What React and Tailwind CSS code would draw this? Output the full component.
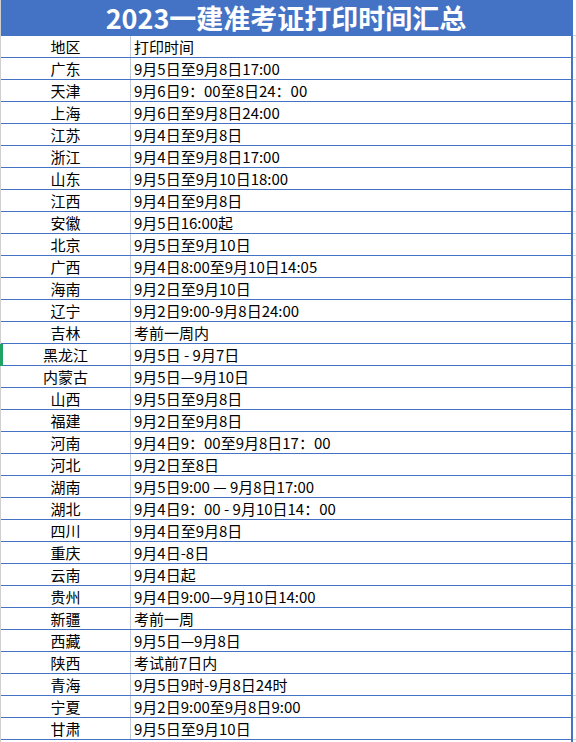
import React from "react";

const rows = [
  ["地区", "打印时间"],
  ["广东", "9月5日至9月8日17:00"],
  ["天津", "9月6日9：00至8日24：00"],
  ["上海", "9月6日至9月8日24:00"],
  ["江苏", "9月4日至9月8日"],
  ["浙江", "9月4日至9月8日17:00"],
  ["山东", "9月5日至9月10日18:00"],
  ["江西", "9月4日至9月8日"],
  ["安徽", "9月5日16:00起"],
  ["北京", "9月5日至9月10日"],
  ["广西", "9月4日8:00至9月10日14:05"],
  ["海南", "9月2日至9月10日"],
  ["辽宁", "9月2日9:00-9月8日24:00"],
  ["吉林", "考前一周内"],
  ["黑龙江", "9月5日 - 9月7日"],
  ["内蒙古", "9月5日—9月10日"],
  ["山西", "9月5日至9月8日"],
  ["福建", "9月2日至9月8日"],
  ["河南", "9月4日9：00至9月8日17：00"],
  ["河北", "9月2日至8日"],
  ["湖南", "9月5日9:00 — 9月8日17:00"],
  ["湖北", "9月4日9：00 - 9月10日14：00"],
  ["四川", "9月4日至9月8日"],
  ["重庆", "9月4日-8日"],
  ["云南", "9月4日起"],
  ["贵州", "9月4日9:00—9月10日14:00"],
  ["新疆", "考前一周"],
  ["西藏", "9月5日—9月8日"],
  ["陕西", "考试前7日内"],
  ["青海", "9月5日9时-9月8日24时"],
  ["宁夏", "9月2日9:00至9月8日9:00"],
  ["甘肃", "9月5日至9月10日"],
];

export default function App() {
  const font = { fontFamily: '"Noto Sans CJK SC", "Noto Sans", sans-serif' };
  return (
    <div
      className="w-[576px] h-[742px] bg-white flex overflow-hidden text-black"
      style={font}
    >
      <div className="w-[571px] flex flex-col border-l border-[#cfcfcf]">
        <div className="h-[36px] bg-[#4472c4] text-center text-white font-bold text-[27px] leading-[35px]">
          2023一建准考证打印时间汇总
        </div>
        {rows.map(([a, b], i) => (
          <div
            key={i}
            className="relative h-[22px] flex border-b border-[#4472c4] text-[15px] leading-[21px]"
          >
            {a === "黑龙江" && (
              <div className="absolute left-[-1px] top-0 w-[3px] h-[22px] bg-[#21a366]" />
            )}
            <div className="w-[130px] text-center border-r border-[#c3cad8]">{a}</div>
            <div className="flex-1 pl-[3px] whitespace-nowrap">{b}</div>
          </div>
        ))}
      </div>
      <div className="w-[2px] bg-[#4472c4]" />
      <div className="flex-1 flex flex-col">
        <div className="h-[36px] border-b border-[#d4d4d4]" />
        {rows.map((_, i) => (
          <div key={i} className="h-[22px] border-b border-[#d4d4d4]" />
        ))}
      </div>
    </div>
  );
}
